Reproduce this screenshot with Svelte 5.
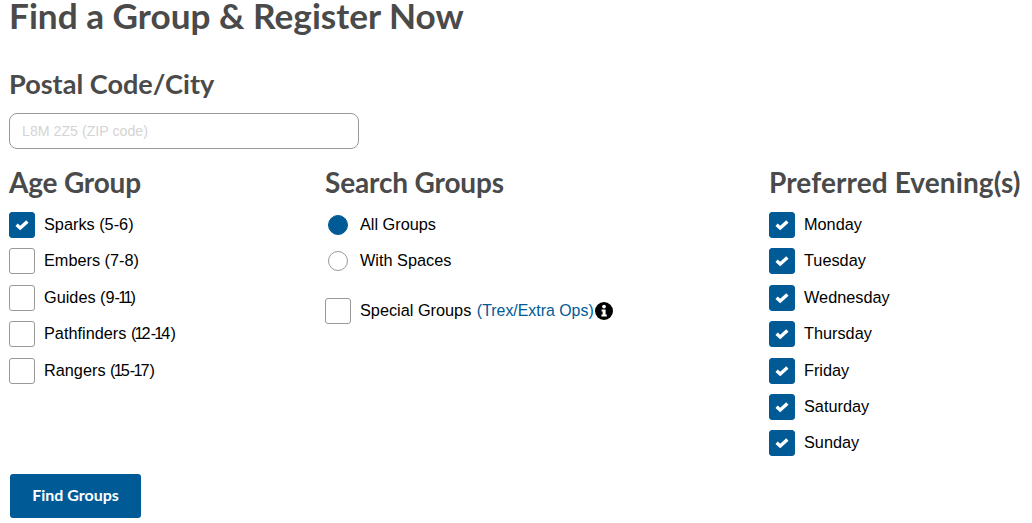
<script>
	const ages = ['Sparks (5-6)', 'Embers (7-8)', 'Guides (9-11)', 'Pathfinders (12-14)', 'Rangers (15-17)'];
	const days = ['Monday', 'Tuesday', 'Wednesday', 'Thursday', 'Friday', 'Saturday', 'Sunday'];
</script>

{#snippet box(checked)}
	<span class="box" class:checked>
		{#if checked}
			<svg viewBox="0 0 14 12" width="14" height="12"><path d="M1.6 5.8 5.2 9 12.4 2.4" fill="none" stroke="#fff" stroke-width="3.4" /></svg>
		{/if}
	</span>
{/snippet}

<main class="page">
	<h1>Find a Group &amp; Register Now</h1>
	<h2 class="postal">Postal Code/City</h2>
	<input class="postal-input" type="text" placeholder="L8M 2Z5 (ZIP code)" />

	<div class="columns">
		<section>
			<h2>Age Group</h2>
			{#each ages as age, i}
				<div class="option">
					{@render box(i === 0)}
					<span class="label">{#each age.split(/(1)/) as part}{#if part === '1'}<span class="one">1</span>{:else}{part}{/if}{/each}</span>
				</div>
			{/each}
		</section>

		<section>
			<h2 class="search">Search Groups</h2>
			<div class="option radio-row"><span class="radio selected"></span><span class="label">All Groups</span></div>
			<div class="option radio-row"><span class="radio"></span><span class="label">With Spaces</span></div>
			<div class="option special">
				{@render box(false)}
				<span class="label">Special Groups <span class="link">(Trex/Extra Ops)</span></span>
				<svg class="info" viewBox="0 0 18 18" width="18" height="18">
					<circle cx="9" cy="9" r="9" fill="#000" />
					<circle cx="9" cy="4.6" r="1.9" fill="#fff" />
					<path d="M6.6 7.6H10.6V12.6H11.8V14.6H6.4V12.6H7.6V9.6H6.6Z" fill="#fff" />
				</svg>
			</div>
		</section>

		<section>
			<h2 class="evenings">Preferred Evening(s)</h2>
			{#each days as day}
				<div class="option">{@render box(true)}<span class="label">{day}</span></div>
			{/each}
		</section>
	</div>

	<button class="find">Find Groups</button>
</main>

<style>
	:global(body) {
		margin: 0;
		background: #fff;
	}
	.page {
		padding-left: 9px;
		height: 523px;
		overflow: hidden;
		box-sizing: border-box;
		font-family: "Liberation Sans", Arial, sans-serif;
		font-size: 16.3px;
		color: #000;
	}
	h1,
	h2 {
		font-family: Lato, "Open Sans", sans-serif;
		font-weight: 700;
		color: #4a4a4a;
		margin: 0;
	}
	h1 {
		font-size: 35.2px;
		line-height: 30px;
	}
	h2 {
		font-size: 28px;
		line-height: 34px;
		letter-spacing: -0.2px;
		white-space: nowrap;
	}
	h2.postal {
		font-size: 27.1px;
		letter-spacing: 0;
		margin-top: 37px;
	}
	h2.search {
		letter-spacing: -0.15px;
	}
	h2.evenings {
		letter-spacing: 0.1px;
	}
	.postal-input {
		display: block;
		box-sizing: border-box;
		width: 350px;
		height: 36px;
		margin-top: 12px;
		padding: 0 12px;
		border: 1px solid #999;
		border-radius: 8px;
		font: 14.2px "Liberation Sans", Arial, sans-serif;
		outline: none;
	}
	.postal-input::placeholder {
		color: #d4d4d4;
		opacity: 1;
	}
	.columns {
		display: grid;
		grid-template-columns: 316px 444px 1fr;
		margin-top: 16px;
		height: 309px;
	}
	.columns h2 {
		margin-bottom: 13px;
	}
	.option {
		display: flex;
		align-items: center;
		gap: 9px;
		height: 26px;
		margin-bottom: 10.4px;
	}
	.label {
		margin-bottom: 1px;
	}
	.one {
		margin-left: -1.8px;
		letter-spacing: -2px;
	}
	.box {
		box-sizing: border-box;
		flex: none;
		width: 26px;
		height: 26px;
		border: 1px solid #999;
		border-radius: 3px;
		display: flex;
		align-items: center;
		justify-content: center;
		background: #fff;
	}
	.box.checked {
		background: #005a96;
		border-color: #005a96;
	}
	.radio-row {
		padding-left: 3px;
		gap: 12px;
	}
	.radio {
		box-sizing: border-box;
		flex: none;
		width: 20px;
		height: 20px;
		border: 1px solid #999;
		border-radius: 50%;
	}
	.radio.selected {
		background: #005a96;
		border-color: #005a96;
	}
	.special {
		margin-top: 24px;
	}
	.link {
		color: #005a96;
		font-size: 15.9px;
		margin-left: 1px;
	}
	.info {
		margin-left: -8px;
		flex: none;
	}
	.find {
		display: block;
		width: 131px;
		height: 44px;
		margin-left: 1px;
		padding: 0 0 4px;
		border: none;
		border-radius: 3px;
		background: #005a96;
		color: #fff;
		font-family: Lato, "Open Sans", sans-serif;
		font-weight: 700;
		font-size: 16px;
	}
</style>
